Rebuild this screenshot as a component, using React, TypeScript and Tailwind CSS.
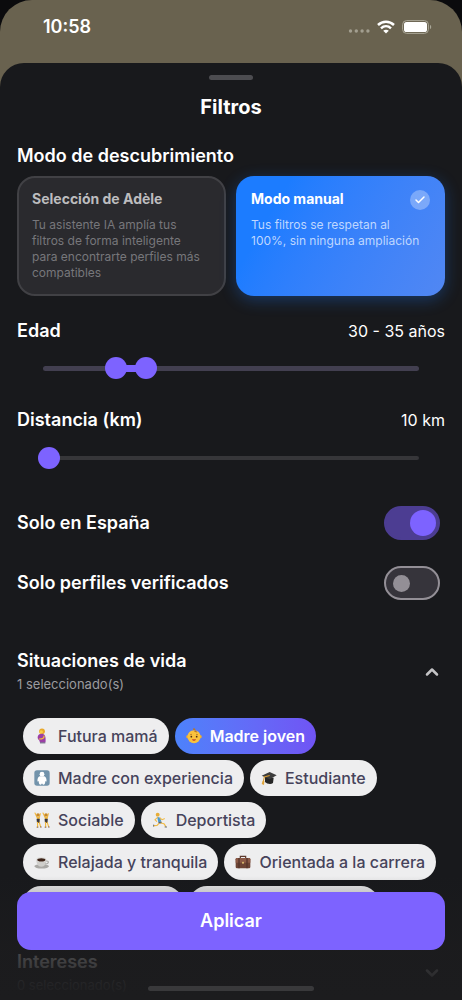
import { useState, type ReactNode } from "react";
import { Check, ChevronDown, ChevronUp } from "lucide-react";

const AGE_MIN = 18;
const AGE_MAX = 80;

function PregnantIcon() {
  return (
    <svg viewBox="0 0 24 24" className="size-4">
      <circle cx="12" cy="5" r="4.4" fill="#e9a92c" />
      <circle cx="10.8" cy="6" r="2.7" fill="#f9cf4b" />
      <path d="M8 9.5c3-1.5 7-1 8.5 2 1.200 2.500 1 7 .8 10H8.600c0-2-.4-3-1.800-4C4.500 15.500 5.500 11 8 9.500z" fill="#9b3fa5" />
      <path d="M15 12c.5 3-2 4.500-7 4.500" stroke="#f5bd3d" strokeWidth="1.800" fill="none" strokeLinecap="round" />
      <path d="M9 21.500h8V23H9z" fill="#5b4a74" />
    </svg>
  );
}

function BabyIcon() {
  return (
    <svg viewBox="0 0 24 24" className="size-4">
      <circle cx="2.800" cy="13" r="2.500" fill="#eda92e" />
      <circle cx="21.200" cy="13" r="2.500" fill="#eda92e" />
      <circle cx="12" cy="13" r="9.800" fill="#f9c23c" />
      <path d="M12 3.500c-3-2-1-4 1-2.800 2 1.200 1 3.800-1 3.800 1.500 2 3.500 2.500 5 2-1-2-3-3.200-5-3z" fill="#b9772a" />
      <circle cx="8" cy="13" r="1.300" fill="#4b2c15" />
      <circle cx="16" cy="13" r="1.300" fill="#4b2c15" />
      <path d="M9.500 17.500c1.500 1.600 3.500 1.600 5 0z" fill="#c6452f" stroke="#c6452f" strokeLinejoin="round" />
      <path d="M6 10.200l3-.8M15 9.400l3 .8" stroke="#a76a20" strokeWidth="1" />
    </svg>
  );
}

function BabySymbolIcon() {
  return (
    <svg viewBox="0 0 24 24" className="size-4">
      <rect x=".5" y=".5" width="23" height="23" rx="4" fill="#7293ab" />
      <circle cx="12" cy="6.200" r="3.600" fill="#fff" />
      <path d="M8.500 9.500h7c2.600 1.200 3.600 4 3.300 7.700l-2-.2c.3 3.500-1 5-2.600 5-1 0-1.800-.8-2.200-2-.4 1.200-1.200 2-2.200 2-1.600 0-2.900-1.500-2.600-5l-2 .2c-.3-3.700.7-6.500 3.300-7.700z" fill="#fff" />
    </svg>
  );
}

function GraduationIcon() {
  return (
    <svg viewBox="0 0 24 24" className="size-4">
      <path d="M6 10l13 1.500-1 8c-3 2.500-9 1.500-12-1.500z" fill="#262626" />
      <path d="M1 8.500L13 3l10.500 5L13 14z" fill="#3d3d3d" />
      <path d="M13 8.200L5 10.500 3.500 17" stroke="#d99b32" strokeWidth="1.600" fill="none" />
      <path d="M2.500 16l2.600.4-.6 6L1 21z" fill="#e0a43a" />
    </svg>
  );
}

function DancersIcon() {
  return (
    <svg viewBox="0 0 24 24" className="size-4">
      {[0, 12].map((x) => (
        <g key={x} transform={`translate(${x} 0)`}>
          <path d="M1.500 1.500L4.500 8M9.500 2.500l-1.500 6" stroke="#f3b93b" strokeWidth="1.600" strokeLinecap="round" />
          <circle cx="6" cy="4.500" r="2.600" fill="#c98a28" />
          <path d="M4.200 7.500h4.200l-.2 4H4.600z" fill="#f3b93b" />
          <path d="M3.800 10h4.800l-.2 6.500H4.500z" fill="#39363c" />
          <path d="M5.300 15.500l.2 6.500M7.800 15.500l2 6" stroke="#f3b93b" strokeWidth="1.700" strokeLinecap="round" />
          <path d="M4 22.800h2.500M9 22.500h2.500" stroke="#70482c" strokeWidth="1.200" />
        </g>
      ))}
    </svg>
  );
}

function RunnerIcon() {
  return (
    <svg viewBox="0 0 24 24" className="size-4">
      <circle cx="8.500" cy="4" r="2.900" fill="#e8ad36" />
      <path d="M7.500 7l5 1.500 1.500 6-4.500.5z" fill="#4a9bd2" />
      <path d="M8 8.500l-3.500 3L7 14M12 9l3 2.500 3.500-1.500" stroke="#f2bb45" strokeWidth="1.600" fill="none" strokeLinecap="round" />
      <path d="M9.500 14.500h5l.3 2.500-5 .5z" fill="#52606c" />
      <path d="M10.500 17l-3 3-4.500.5M13.500 16.500l4.500 1 2.500 4" stroke="#f2bb45" strokeWidth="1.800" fill="none" strokeLinecap="round" />
      <path d="M2.500 19v3M19 22.500h3.500" stroke="#5c6670" strokeWidth="1.400" />
    </svg>
  );
}

function CoffeeIcon() {
  return (
    <svg viewBox="0 0 24 24" className="size-4">
      <ellipse cx="11.500" cy="18.500" rx="11" ry="3.300" fill="#a9a8a5" />
      <path d="M3.500 8.500h15c0 6-2.500 10.500-7.500 10.500S3.500 14.500 3.500 8.500z" fill="#cfcecb" />
      <path d="M18 10.500c5-1 5 4.500-1.500 4.500" stroke="#a9a8a5" strokeWidth="1.600" fill="none" />
      <ellipse cx="11" cy="8.500" rx="7.500" ry="3.500" fill="#dddcd9" />
      <ellipse cx="11" cy="8.800" rx="6.200" ry="2.600" fill="#3d2419" />
    </svg>
  );
}

function BriefcaseIcon() {
  return (
    <svg viewBox="0 0 24 24" className="size-4">
      <path d="M8 6V3.500h8V6" stroke="#5d392c" strokeWidth="1.800" fill="none" />
      <rect x="1" y="6" width="22" height="15.500" rx="2" fill="#6d4435" />
      <path d="M1 8c0-1.500 1-2 2-2h18c1 0 2 .5 2 2v5H1z" fill="#8b5946" />
      <path d="M5 6h2v15.500H5zM17 6h2v15.500h-2z" fill="#56352a" />
      <rect x="10.500" y="11.500" width="3" height="3" rx="1" fill="#d7b56c" />
    </svg>
  );
}

const SITUATIONS = [
  { label: "Futura mamá", icon: <PregnantIcon /> },
  { label: "Madre joven", icon: <BabyIcon /> },
  { label: "Madre con experiencia", icon: <BabySymbolIcon /> },
  { label: "Estudiante", icon: <GraduationIcon /> },
  { label: "Sociable", icon: <DancersIcon /> },
  { label: "Deportista", icon: <RunnerIcon /> },
  { label: "Relajada y tranquila", icon: <CoffeeIcon /> },
  { label: "Orientada a la carrera", icon: <BriefcaseIcon /> },
];

function StatusBar() {
  return (
    <div className="flex h-[63px] items-center justify-between pr-[30px] pb-[10px] pl-[43px]">
      <span className="text-lg font-semibold">10:58</span>
      <div className="flex items-center gap-[7px]">
        <svg viewBox="0 0 22 14" className="h-[14px] w-[22px]" fill="#a39f90">
          <circle cx="2.500" cy="11" r="1.700" />
          <circle cx="8.300" cy="11" r="1.700" />
          <circle cx="14.100" cy="11" r="1.700" />
          <circle cx="19.900" cy="11" r="1.700" />
        </svg>
        <svg viewBox="0 0 18 14" className="h-[14px] w-[18px]" fill="none" stroke="#fff">
          <path d="M1 5c4.500-4.400 11.500-4.400 16 0" strokeWidth="2.500" />
          <path d="M4 8.300c2.900-2.800 7.100-2.800 10 0" strokeWidth="2.400" />
          <path d="M9 13.600L6.200 10.800c1.600-1.500 4-1.500 5.600 0z" fill="#fff" stroke="none" />
        </svg>
        <svg viewBox="0 0 30 14" className="h-[14px] w-[30px]">
          <rect x=".6" y=".6" width="25.800" height="12.800" rx="4" fill="none" stroke="#aaa798" />
          <rect x="2" y="2" width="23" height="10" rx="2.600" fill="#fff" />
          <path d="M28 4.800c1.700.7 1.700 3.700 0 4.400z" fill="#aaa798" />
        </svg>
      </div>
    </div>
  );
}

type ModeCardProps = { title: string; text: string; active: boolean; onClick: () => void };

function ModeCard({ title, text, active, onClick }: ModeCardProps) {
  return (
    <button
      type="button"
      aria-pressed={active}
      onClick={onClick}
      className={`relative flex min-h-[120px] flex-1 flex-col items-start gap-2 rounded-[18px] border-2 px-[13px] py-[11px] text-left ${
        active
          ? "border-transparent bg-linear-120 from-[#1c7cff] from-20% to-[#5187f3] bg-origin-border shadow-[0_4px_16px_#1c7cff50]"
          : "border-[#414145] bg-[#2a2a2e]"
      }`}
    >
      <span className={`text-sm font-bold ${active ? "text-white" : "text-[#bcbcbe]"}`}>{title}</span>
      <span className={`pr-1 text-xs leading-4 ${active ? "text-[#bfd7ff]" : "text-[#77777b]"}`}>{text}</span>
      {active && (
        <span className="absolute top-3 right-[13px] flex size-5 items-center justify-center rounded-full bg-white/30">
          <Check size={12} strokeWidth={3} />
        </span>
      )}
    </button>
  );
}

const thumb =
  "[&::-webkit-slider-thumb]:pointer-events-auto [&::-webkit-slider-thumb]:size-[22px] [&::-webkit-slider-thumb]:appearance-none [&::-webkit-slider-thumb]:rounded-full [&::-webkit-slider-thumb]:bg-[#7d63ff]";
const range = `pointer-events-none absolute inset-0 m-0 h-[22px] w-full appearance-none bg-transparent ${thumb}`;

function Switch({ id, defaultChecked }: { id: string; defaultChecked?: boolean }) {
  return (
    <input
      id={id}
      type="checkbox"
      role="switch"
      defaultChecked={defaultChecked}
      className="mr-[5px] flex h-[34px] w-14 shrink-0 appearance-none items-center rounded-full border-2 border-[#938f96] bg-[#36343b] px-[7px] before:size-[17px] before:rounded-full before:bg-[#938f96] checked:justify-end checked:border-[#4c3d92] checked:bg-[#4c3d92] checked:px-[2px] checked:before:size-[26px] checked:before:bg-[#7d63ff]"
    />
  );
}

type SectionHeaderProps = { title: string; count: number; icon: ReactNode; expanded: boolean };

function SectionHeader({ title, count, icon, expanded }: SectionHeaderProps) {
  return (
    <button type="button" aria-expanded={expanded} className="flex w-full items-center justify-between pr-[3px] text-left">
      <span className="flex flex-col">
        <span className="text-lg leading-6 font-semibold">{title}</span>
        <span className="text-[13px] leading-[22px] text-[#9b9b9f]">{count} seleccionado(s)</span>
      </span>
      {icon}
    </button>
  );
}

export default function App() {
  const [mode, setMode] = useState("manual");
  const [age, setAge] = useState([30, 35]);
  const [distance, setDistance] = useState(10);
  const [selected, setSelected] = useState("Madre joven");
  const percent = (value: number) => ((value - AGE_MIN) / (AGE_MAX - AGE_MIN)) * 100;

  return (
    <div className="h-screen overflow-hidden bg-[#0b0b0d] font-['Inter',sans-serif] text-white">
      <div className="relative flex h-full flex-col overflow-hidden rounded-t-[32px] bg-[#69624f]">
        <StatusBar />
        <main className="flex min-h-0 flex-1 flex-col overflow-hidden rounded-t-[24px] bg-[#18191c] px-[17px] pt-3">
          <div className="h-[5px] w-11 shrink-0 self-center rounded-full bg-[#4c4c50]" />
          <h1 className="mt-[13px] text-center text-xl leading-7 font-bold">Filtros</h1>

          <h2 className="mt-[23px] text-lg leading-6 font-semibold">Modo de descubrimiento</h2>
          <div className="mt-2 flex gap-[10px]">
            <ModeCard
              title="Selección de Adèle"
              text="Tu asistente IA amplía tus filtros de forma inteligente para encontrarte perfiles más compatibles"
              active={mode === "adele"}
              onClick={() => setMode("adele")}
            />
            <ModeCard
              title="Modo manual"
              text="Tus filtros se respetan al 100%, sin ninguna ampliación"
              active={mode === "manual"}
              onClick={() => setMode("manual")}
            />
          </div>

          <div className="mt-[23px] flex items-center justify-between">
            <h2 className="text-lg leading-6 font-semibold">Edad</h2>
            <span className="text-base leading-6">{age[0]} - {age[1]} años</span>
          </div>
          <div className="relative mx-[15px] mt-[14px] h-[22px] shrink-0">
            <div className="relative mx-[11px] mt-[9px] h-[5px] rounded-full bg-[#423f50]">
              <div
                className="absolute -inset-y-px bg-[#7d63ff]"
                style={{ left: `${percent(age[0])}%`, right: `${100 - percent(age[1])}%` }}
              />
            </div>
            <input type="range" aria-label="Edad mínima" min={AGE_MIN} max={AGE_MAX} value={age[0]} onChange={(e) => setAge([Math.min(+e.target.value, age[1]), age[1]])} className={range} />
            <input type="range" aria-label="Edad máxima" min={AGE_MIN} max={AGE_MAX} value={age[1]} onChange={(e) => setAge([age[0], Math.max(+e.target.value, age[0])])} className={range} />
          </div>

          <div className="mt-[29px] flex items-center justify-between">
            <label htmlFor="distance" className="text-lg leading-6 font-semibold">Distancia (km)</label>
            <span className="text-base leading-6">{distance} km</span>
          </div>
          <div className="relative mx-[15px] mt-[15px] h-[22px] shrink-0">
            <div className="mx-[11px] mt-[9px] h-[4px] rounded-full bg-[#363639]" />
            <input id="distance" type="range" min={5} max={300} value={distance} onChange={(e) => setDistance(+e.target.value)} className={range} />
          </div>

          <div className="mt-[37px] flex items-center justify-between">
            <label htmlFor="country" className="text-lg leading-6 font-semibold">Solo en España</label>
            <Switch id="country" defaultChecked />
          </div>
          <div className="mt-[26px] flex items-center justify-between">
            <label htmlFor="verified" className="text-lg leading-6 font-semibold">Solo perfiles verificados</label>
            <Switch id="verified" />
          </div>

          <div className="mt-[49px]">
            <SectionHeader title="Situaciones de vida" count={1} expanded icon={<ChevronUp size={20} strokeWidth={3} color="#c4c4c6" />} />
          </div>
          <div className="mt-[23px] -mr-2 ml-[6px] flex flex-wrap gap-[6px]">
            {SITUATIONS.map(({ label, icon }) => (
              <button
                key={label}
                type="button"
                aria-pressed={selected === label}
                onClick={() => setSelected(label)}
                className={`flex h-9 items-center gap-2 rounded-full px-[11px] text-base ${
                  selected === label
                    ? "bg-linear-to-r from-[#4c82fb] to-[#7054f4] font-semibold text-white"
                    : "bg-[#eeeeef] font-medium text-[#46435b]"
                }`}
              >
                {icon}
                {label}
              </button>
            ))}
            <span className="h-9 w-[160px] rounded-full bg-[#eeeeef]" />
            <span className="h-9 w-[190px] rounded-full bg-[#eeeeef]" />
          </div>

          <div className="mt-7">
            <SectionHeader title="Intereses" count={0} expanded={false} icon={<ChevronDown size={20} strokeWidth={3} color="#c4c4c6" />} />
          </div>
        </main>

        <footer className="pointer-events-none absolute inset-x-0 bottom-0 flex h-[124px] flex-col items-center justify-between bg-linear-to-b from-[#1c1c1e]/0 via-[#1c1c1e]/80 via-60% to-[#1c1c1e] px-[17px] pt-4 pb-[9px]">
          <button type="button" className="pointer-events-auto h-[58px] w-full rounded-[14px] bg-[#7d63ff] text-lg font-semibold">
            Aplicar
          </button>
          <div className="h-[5px] w-[166px] rounded-full bg-[#39393b]" />
        </footer>
      </div>
    </div>
  );
}
